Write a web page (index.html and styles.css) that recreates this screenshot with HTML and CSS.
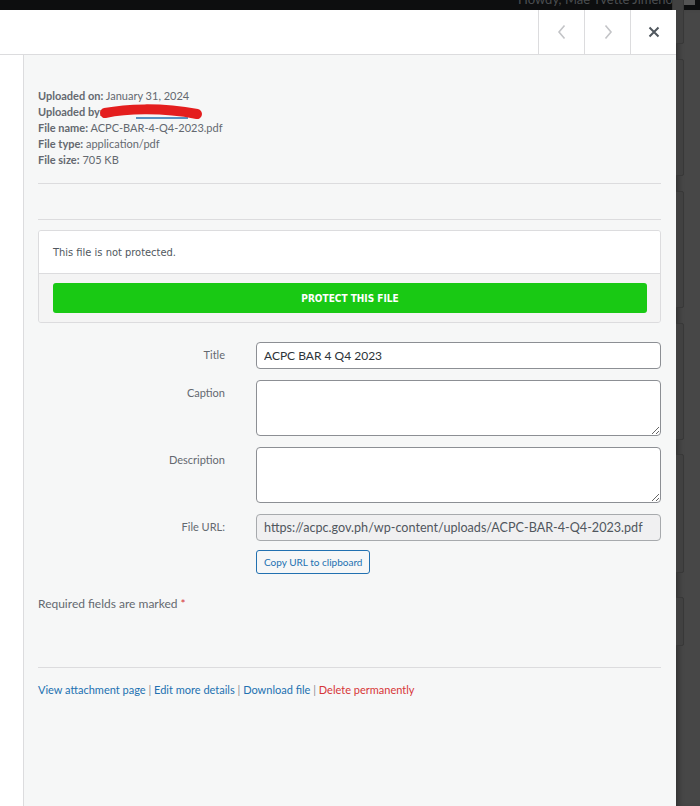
FILE: index.html
```html
<!DOCTYPE html>
<html lang="en">
<head>
<meta charset="utf-8">
<title>Attachment details</title>
<link rel="stylesheet" href="styles.css">
</head>
<body>
<div class="adminbar">
  <span class="howdy">Howdy, Mae Yvette Jimeno</span>
  <span class="avatar"></span>
</div>
<div class="stage">
  <div class="modal">
    <div class="modal-head">
      <div class="head-fill"></div>
      <button class="nav-btn" aria-label="Previous">
        <svg width="12" height="16" viewBox="0 0 12 16"><path d="M8.5 1.5 L3 8 L8.5 14.5" fill="none" stroke="#c3c4c7" stroke-width="1.6"/></svg>
      </button>
      <button class="nav-btn" aria-label="Next">
        <svg width="12" height="16" viewBox="0 0 12 16"><path d="M3.5 1.5 L9 8 L3.5 14.5" fill="none" stroke="#c3c4c7" stroke-width="1.6"/></svg>
      </button>
      <button class="nav-btn close" aria-label="Close">
        <svg width="12" height="12" viewBox="0 0 12 12"><path d="M1.5 1.5 L10.5 10.5 M10.5 1.5 L1.5 10.5" fill="none" stroke="#50575e" stroke-width="2"/></svg>
      </button>
    </div>
    <div class="modal-body">
      <div class="side"></div>
      <div class="details">
        <div class="meta">
          <div><strong>Uploaded on:</strong> January 31, 2024</div>
          <div><strong>Uploaded by:</strong><svg class="scribble" width="104" height="16" viewBox="0 0 104 16"><path d="M36 14 H88" stroke="#2271b1" stroke-width="1.3"/><path d="M5 9 C 25 5, 60 3, 97 10" fill="none" stroke="#e41e1e" stroke-width="10" stroke-linecap="round"/></svg></div>
          <div><strong>File name:</strong> ACPC-BAR-4-Q4-2023.pdf</div>
          <div><strong>File type:</strong> application/pdf</div>
          <div><strong>File size:</strong> 705 KB</div>
        </div>
        <hr class="rule first">
        <hr class="rule second">
        <div class="protect">
          <div class="protect-msg">This file is not protected.</div>
          <div class="protect-foot">
            <button class="protect-btn">PROTECT THIS FILE</button>
          </div>
        </div>
        <div class="fields">
          <label class="lab">Title</label>
          <div class="ctl"><input class="inp" type="text" value="ACPC BAR 4 Q4 2023"></div>
          <label class="lab">Caption</label>
          <div class="ctl"><textarea class="area"></textarea></div>
          <label class="lab">Description</label>
          <div class="ctl"><textarea class="area"></textarea></div>
          <label class="lab">File URL:</label>
          <div class="ctl">
            <input class="inp url" type="text" readonly value="https://acpc.gov.ph/wp-content/uploads/ACPC-BAR-4-Q4-2023.pdf">
            <button class="copy-btn">Copy URL to clipboard</button>
          </div>
        </div>
        <p class="required">Required fields are marked <span class="star">*</span></p>
        <hr class="rule bottom">
        <div class="actions">
          <a href="#">View attachment page</a> <span class="sep">|</span> <a href="#">Edit more details</a> <span class="sep">|</span> <a href="#">Download file</a> <span class="sep">|</span> <a href="#" class="del">Delete permanently</a>
        </div>
      </div>
    </div>
  </div>
  <div class="backdrop">
    <div class="ghost g1"></div>
    <div class="ghost g2"></div>
    <div class="ghost g3"></div>
    <div class="ghost g4"></div>
    <div class="ghost g5"></div>
    <div class="ghost g6"></div>
  </div>
</div>
</body>
</html>
```

FILE: styles.css
```css
* { box-sizing: border-box; }
html, body { margin: 0; padding: 0; }
body {
  width: 700px;
  height: 806px;
  overflow: hidden;
  background: #464646;
  font-family: "Lato", "Noto Sans", sans-serif;
  color: #3c434a;
}
.adminbar {
  height: 10px;
  background: #0d0e0f;
  display: flex;
  justify-content: flex-end;
  align-items: flex-end;
  overflow: hidden;
  padding-right: 5px;
  gap: 6px;
}
.howdy {
  font-size: 13px;
  line-height: 16px;
  color: #4a4d50;
  margin-bottom: 3px;
}
.avatar {
  width: 16px;
  height: 16px;
  background: #555;
  margin-bottom: 5px;
}
.stage {
  display: flex;
  height: 796px;
}
.modal {
  width: 676px;
  flex: none;
  display: flex;
  flex-direction: column;
  background: #f6f7f7;
  position: relative;
  z-index: 2;
}
.modal-head {
  height: 45px;
  background: #fff;
  border-bottom: 1px solid #dcdcde;
  display: flex;
}
.head-fill { flex: 1; }
.nav-btn {
  width: 46px;
  height: 44px;
  border: 0;
  border-left: 1px solid #dcdcde;
  background: #fff;
  padding: 0;
  margin: 0;
  display: flex;
  align-items: center;
  justify-content: center;
}
.modal-body {
  flex: 1;
  display: flex;
}
.side {
  width: 24px;
  background: #fff;
  border-right: 1px solid #dcdcde;
}
.details {
  flex: 1;
  padding: 33px 15px 0 14px;
}
.meta {
  font-size: 11px;
  line-height: 16px;
  color: #646970;
}
.meta strong { font-weight: 700; }
.scribble {
  vertical-align: -4px;
  margin-left: -3px;
  overflow: visible;
}
.rule {
  border: 0;
  border-top: 1px solid #dcdcde;
  margin: 0;
}
.rule.first { margin-top: 15px; }
.rule.second { margin-top: 35px; }
.protect {
  margin-top: 10px;
  border: 1px solid #dcdcde;
  border-radius: 3px;
  overflow: hidden;
  font-family: "Liberation Sans Narrow", "DejaVu Sans Condensed", "Liberation Sans", sans-serif;
}
.protect-msg {
  background: #fff;
  height: 43px;
  padding: 0 14px;
  display: flex;
  align-items: center;
  font-size: 11px;
  color: #50575e;
  border-bottom: 1px solid #dcdcde;
}
.protect-foot {
  background: #f4f4f4;
  padding: 9px 13px 9px 14px;
}
.protect-btn {
  width: 100%;
  height: 30px;
  border: 0;
  border-radius: 3px;
  background: #19c914;
  color: #fff;
  font-family: inherit;
  font-size: 10px;
  font-weight: bold;
  letter-spacing: 0;
}
.fields {
  margin-top: 19px;
  display: grid;
  grid-template-columns: 187px 1fr;
  column-gap: 31px;
  row-gap: 11px;
}
.lab {
  text-align: right;
  font-size: 11px;
  color: #646970;
  padding-top: 5px;
  line-height: 16px;
}
.ctl {
  display: flex;
  flex-direction: column;
  align-items: flex-start;
}
.inp {
  width: 100%;
  height: 27px;
  border: 1px solid #8c8f94;
  border-radius: 4px;
  background: #fff;
  padding: 0 7px;
  font-family: inherit;
  font-size: 12px;
  color: #2c3338;
}
.inp.url {
  background: #f0f0f1;
  border-color: #a7aaad;
  font-size: 12.6px;
  color: #50575e;
}
.area {
  width: 100%;
  height: 56px;
  border: 1px solid #8c8f94;
  border-radius: 4px;
  background: #fff;
  resize: vertical;
  display: block;
}
.copy-btn {
  margin-top: 9px;
  height: 24px;
  padding: 0 7px;
  border: 1px solid #2271b1;
  border-radius: 3px;
  background: #f6f7f7;
  color: #2271b1;
  font-family: inherit;
  font-size: 10px;
}
.required {
  margin: 22px 0 0;
  font-size: 12px;
  line-height: 16px;
  color: #646970;
}
.star { color: #d63638; }
.rule.bottom { margin-top: 55px; }
.actions {
  margin-top: 14px;
  font-size: 11px;
  line-height: 16px;
  color: #8c8f94;
}
.actions a {
  color: #2271b1;
  text-decoration: none;
}
.actions a.del { color: #d63638; }
.backdrop {
  flex: 1;
  position: relative;
  z-index: 1;
  background: #474747;
  box-shadow: inset 6px 0 6px -4px rgba(0,0,0,0.35);
}
.ghost {
  position: absolute;
  left: -4px;
  width: 12px;
  background: #414141;
  border: 1px solid #383838;
  border-radius: 2px;
}
.g1 { top: -20px; height: 54px; }
.g2 { top: 49px; height: 117px; }
.g3 { top: 181px; height: 117px; }
.g4 { top: 313px; height: 117px; }
.g5 { top: 444px; height: 119px; }
.g6 { top: 587px; height: 49px; }
```
